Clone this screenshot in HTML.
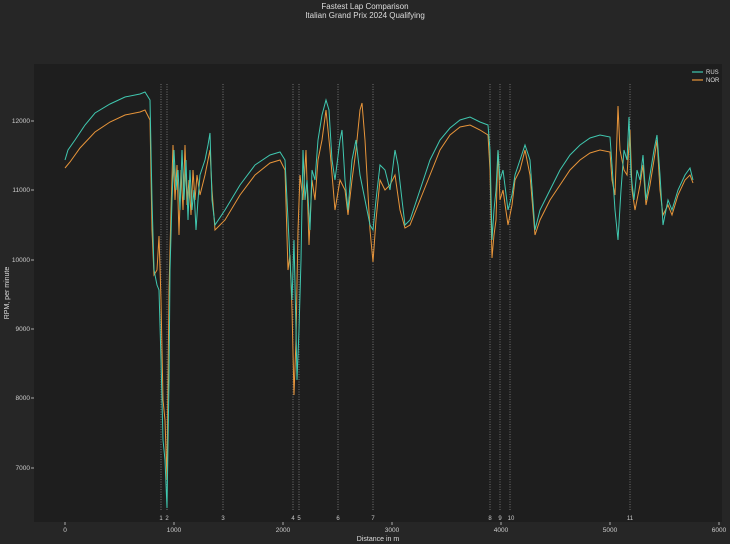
<!DOCTYPE html>
<html><head><meta charset="utf-8"><style>
html,body{margin:0;padding:0;background:#262626;}
svg{display:block;font-family:"Liberation Sans",sans-serif;}
</style></head><body>
<svg width="730" height="544" viewBox="0 0 730 544">
<rect width="730" height="544" fill="#262626"/>
<text x="365" y="9" fill="#ddd" font-size="8" text-anchor="middle">Fastest Lap Comparison</text>
<text x="365" y="18" fill="#ddd" font-size="8" text-anchor="middle">Italian Grand Prix 2024 Qualifying</text>
<rect x="34" y="64" width="688" height="458" fill="#1e1e1e"/>
<g stroke="#888" stroke-width="0.8" stroke-dasharray="1,1.5">
<line x1="161" y1="84" x2="161" y2="510"/><line x1="167" y1="84" x2="167" y2="510"/>
<line x1="223" y1="84" x2="223" y2="510"/><line x1="293" y1="84" x2="293" y2="510"/>
<line x1="299" y1="84" x2="299" y2="510"/><line x1="338" y1="84" x2="338" y2="510"/>
<line x1="373" y1="84" x2="373" y2="510"/><line x1="490" y1="84" x2="490" y2="510"/>
<line x1="500" y1="84" x2="500" y2="510"/><line x1="510" y1="84" x2="510" y2="510"/>
<line x1="630" y1="84" x2="630" y2="510"/>
</g>
<g fill="#ccc" font-size="6" text-anchor="middle">
<text x="161" y="520">1</text><text x="167" y="520">2</text><text x="223" y="520">3</text>
<text x="293" y="520">4</text><text x="299" y="520">5</text><text x="338" y="520">6</text>
<text x="373" y="520">7</text><text x="490" y="520">8</text><text x="500" y="520">9</text>
<text x="511" y="520">10</text><text x="630" y="520">11</text>
</g>
<polyline fill="none" stroke="#e8953a" stroke-width="1" points="65,168 70,162 80,148 95,132 110,122 125,115 140,112 145,110 150,120 152,230 154,275 157,270 159,236 161,300 163,400 165,420 167,480 169,290 171,210 173,145 175,200 177,165 179,235 181,170 183,210 185,145 187,205 189,180 191,215 193,170 195,200 197,175 200,195 205,175 210,150 212,190 215,230 225,220 240,195 255,175 270,163 280,160 285,170 288,270 290,255 292,310 294,395 296,340 298,230 300,175 303,200 306,150 309,245 312,180 315,200 318,160 322,140 326,110 330,150 335,210 340,180 345,190 348,215 352,180 356,150 360,110 362,103 365,140 370,230 373,262 376,220 380,180 385,190 390,185 395,175 400,210 405,228 410,225 420,200 430,175 440,150 450,135 460,127 470,125 480,130 488,135 490,170 492,258 494,235 496,220 498,150 500,200 503,190 508,225 512,205 515,180 520,170 525,150 530,175 535,235 540,220 550,200 560,185 570,170 580,160 590,153 600,150 610,152 612,180 615,195 618,106 620,150 624,170 627,175 630,130 632,190 635,210 640,185 643,165 646,205 650,185 654,160 657,140 660,190 663,215 668,205 672,215 678,195 685,180 690,175 693,183"/>
<polyline fill="none" stroke="#40c8b0" stroke-width="1" points="65,160 68,150 75,140 85,125 95,113 110,104 125,97 140,94 145,92 150,100 152,200 154,270 157,285 159,290 161,360 163,440 165,460 167,508 169,380 170,270 172,200 174,150 176,190 178,170 180,210 182,150 184,200 186,160 188,220 190,170 192,210 194,190 196,230 198,200 200,175 205,160 208,145 210,133 212,200 215,225 225,210 240,185 255,165 270,155 280,152 285,160 290,260 292,300 294,240 296,330 297,380 299,330 301,260 303,150 305,200 307,180 310,230 312,170 315,180 318,140 322,115 326,100 329,110 332,160 335,180 340,140 342,130 345,180 348,210 352,160 356,140 360,175 365,200 370,225 373,230 376,200 380,165 385,170 390,190 395,150 398,165 402,200 405,225 410,220 420,190 430,160 440,140 450,128 460,120 470,117 480,122 488,125 490,150 492,240 494,210 496,190 498,150 500,180 503,170 508,210 512,195 515,175 520,160 525,145 530,160 535,230 540,210 550,190 560,170 570,155 580,145 590,138 600,135 610,137 612,165 615,210 618,240 621,190 624,150 627,160 629,117 631,175 634,200 637,170 640,180 643,155 646,200 650,175 654,150 657,135 660,175 663,225 668,200 672,210 678,190 685,175 690,168 693,180"/>
<g stroke="#ccc" stroke-width="0.8">
<line x1="31" y1="121" x2="34" y2="121"/><line x1="31" y1="190" x2="34" y2="190"/>
<line x1="31" y1="260" x2="34" y2="260"/><line x1="31" y1="329" x2="34" y2="329"/>
<line x1="31" y1="398" x2="34" y2="398"/><line x1="31" y1="468" x2="34" y2="468"/>
<line x1="65" y1="522" x2="65" y2="525"/><line x1="174" y1="522" x2="174" y2="525"/>
<line x1="283" y1="522" x2="283" y2="525"/><line x1="392" y1="522" x2="392" y2="525"/>
<line x1="501" y1="522" x2="501" y2="525"/><line x1="610" y1="522" x2="610" y2="525"/>
<line x1="719" y1="522" x2="719" y2="525"/>
</g>
<g fill="#ccc" font-size="6.5" text-anchor="end">
<text x="30" y="123">12000</text><text x="30" y="192">11000</text><text x="30" y="262">10000</text>
<text x="30" y="331">9000</text><text x="30" y="400">8000</text><text x="30" y="470">7000</text>
</g>
<g fill="#ccc" font-size="6.5" text-anchor="middle">
<text x="65" y="532">0</text><text x="174" y="532">1000</text><text x="283" y="532">2000</text>
<text x="392" y="532">3000</text><text x="501" y="532">4000</text><text x="610" y="532">5000</text>
<text x="719" y="532">6000</text>
</g>
<text x="378" y="541" fill="#ddd" font-size="7" text-anchor="middle">Distance in m</text>
<text transform="translate(9,293) rotate(-90)" fill="#ddd" font-size="7" text-anchor="middle">RPM, per minute</text>
<line x1="692" y1="72" x2="703" y2="72" stroke="#40c8b0" stroke-width="1.2"/>
<line x1="692" y1="80" x2="703" y2="80" stroke="#e8953a" stroke-width="1.2"/>
<text x="706" y="74" fill="#ddd" font-size="6">RUS</text>
<text x="706" y="82" fill="#ddd" font-size="6">NOR</text>
</svg>
</body></html>
